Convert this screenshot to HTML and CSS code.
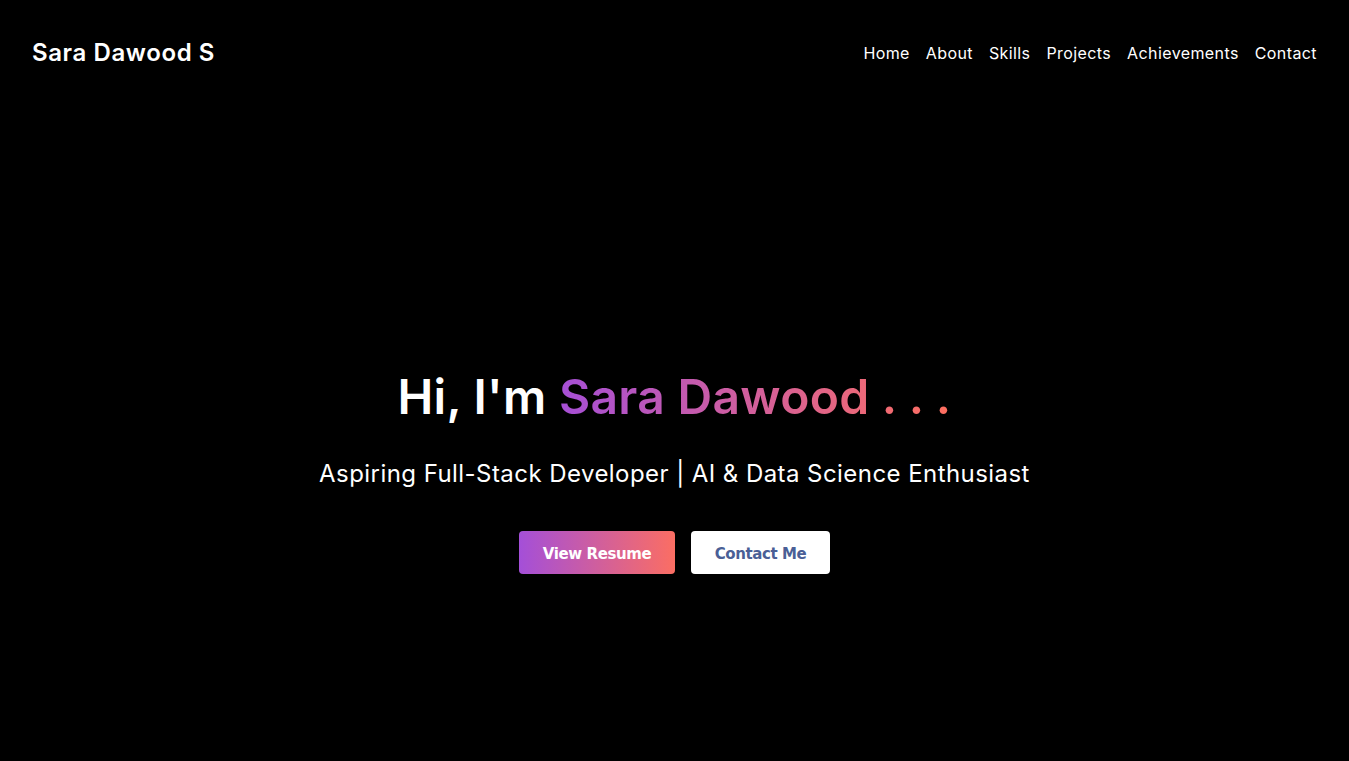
FILE: index.html
```html
<!DOCTYPE html>
<html lang="en">
<head>
<meta charset="utf-8">
<title>Sara Dawood S</title>
<link rel="stylesheet" href="styles.css">
</head>
<body>
<header class="site-header">
  <div class="logo">Sara Dawood S</div>
  <nav class="nav">
    <a href="#">Home</a>
    <a href="#">About</a>
    <a href="#">Skills</a>
    <a href="#">Projects</a>
    <a href="#">Achievements</a>
    <a href="#">Contact</a>
  </nav>
</header>
<main class="hero">
  <h1 class="hero-title">Hi, I'm <span class="grad">Sara Dawood . . .</span></h1>
  <p class="hero-sub">Aspiring Full-Stack Developer | AI &amp; Data Science Enthusiast</p>
  <div class="actions">
    <a class="btn btn-primary" href="#">View Resume</a>
    <a class="btn btn-light" href="#">Contact Me</a>
  </div>
</main>
</body>
</html>
```
FILE: styles.css
```css
* { box-sizing: border-box; }
html, body { margin: 0; background: #000; color: #fff; }
body { font-family: Inter, "Open Sans", sans-serif; height: 761px; overflow: hidden; }
.site-header {
  display: flex;
  justify-content: space-between;
  align-items: center;
  padding: 35px 32px;
}
.logo { font-size: 24px; font-weight: 600; line-height: 36px; letter-spacing: 0.6px; }
.nav { display: flex; gap: 16px; }
.nav a { color: #fff; text-decoration: none; font-size: 16px; line-height: 24px; letter-spacing: 0.4px; }
.hero {
  display: flex;
  flex-direction: column;
  align-items: center;
  padding-top: 262px;
}
.hero-title { margin: 0; font-size: 48px; font-weight: 600; line-height: 58px; letter-spacing: 0.3px; }
.grad {
  background: linear-gradient(90deg, #a64fd6, #ff6f5f);
  -webkit-background-clip: text;
  background-clip: text;
  color: transparent;
}
.hero-sub { margin: 30px 0 0; font-size: 24px; line-height: 36px; font-weight: 400; letter-spacing: 0.44px; }
.actions { display: flex; gap: 16px; margin-top: 39px; }
.btn {
  display: flex; align-items: center; justify-content: center;
  height: 43px; padding-top: 2px; border-radius: 4px; text-decoration: none;
  font-family: "DejaVu Sans", Verdana, sans-serif; font-weight: 700; font-size: 15px;
  letter-spacing: -0.4px;
}
.btn-primary { width: 156px; color: #fff; background: linear-gradient(90deg, #a44fd8, #fb6e63); }
.btn-light { width: 139px; color: #4a5f96; background: #fff; }
```
